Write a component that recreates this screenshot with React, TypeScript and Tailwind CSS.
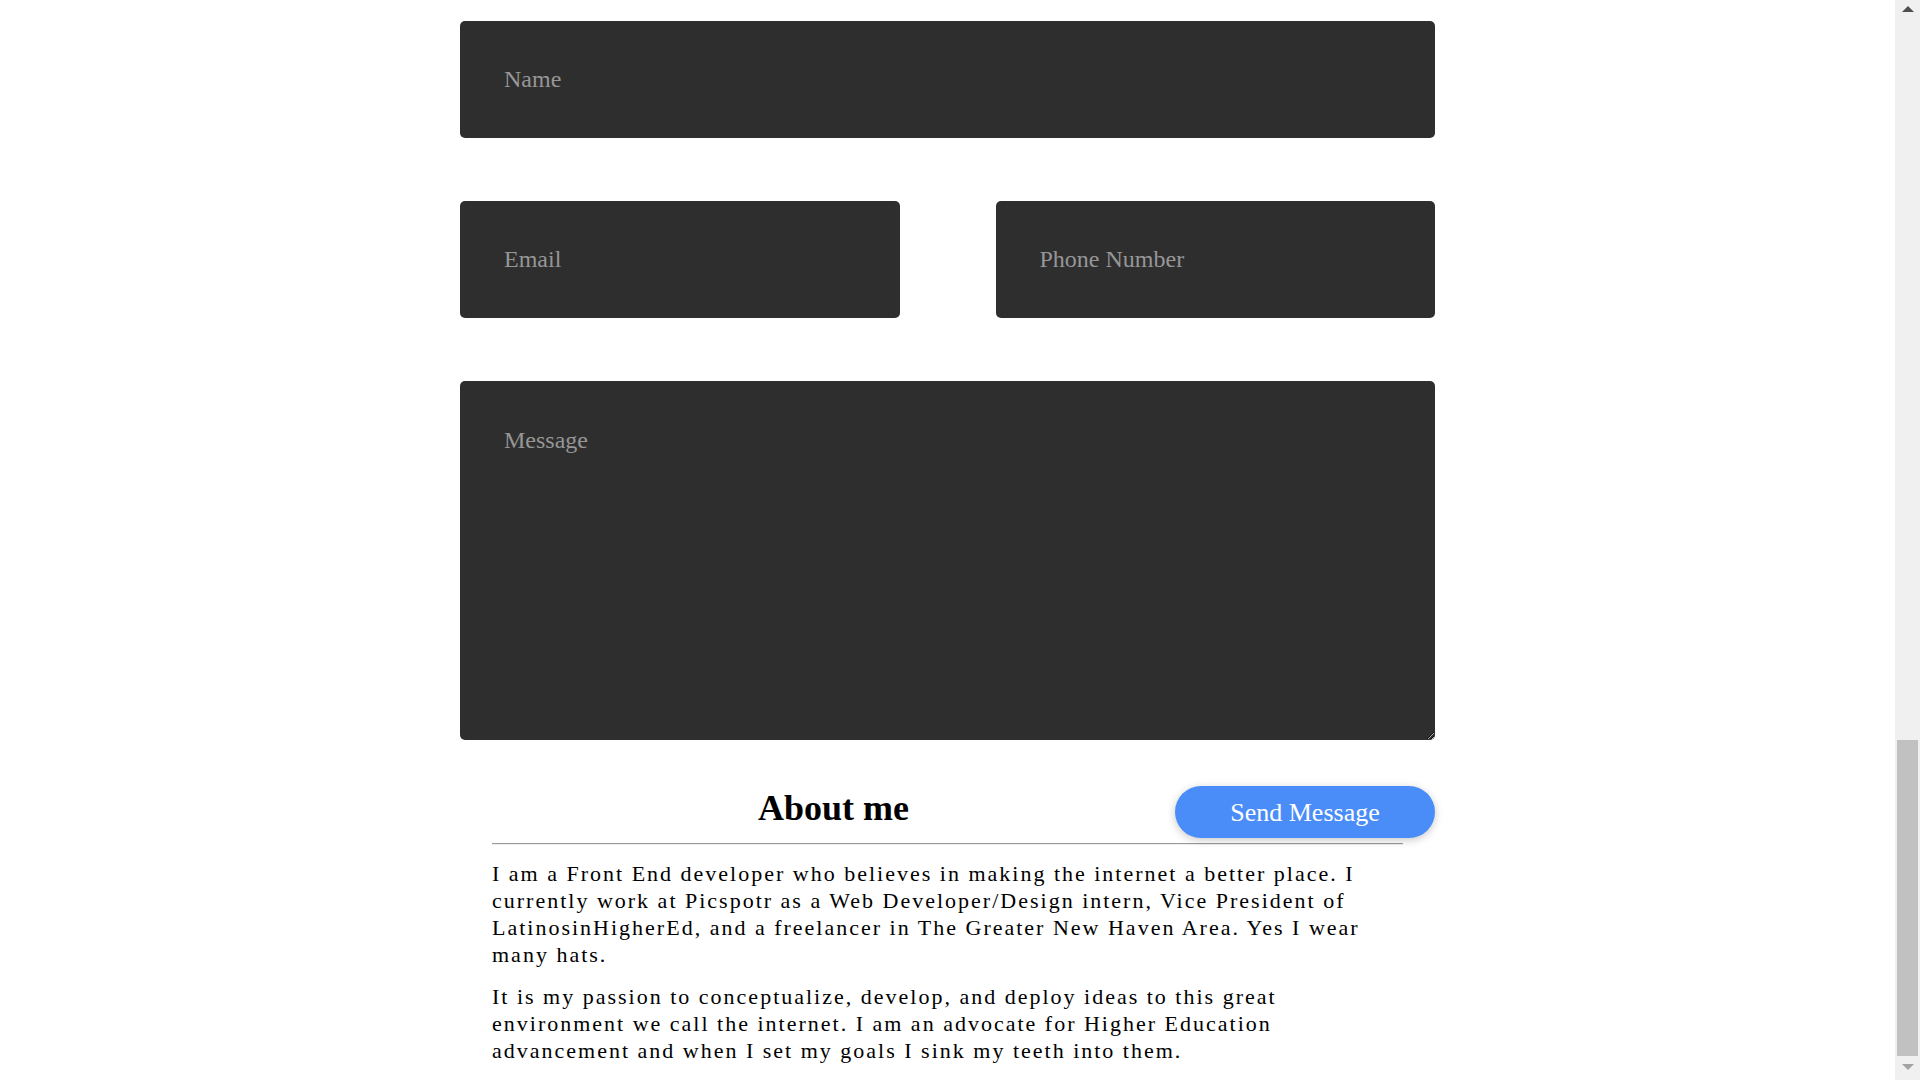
import React from "react";

const serif = "font-['Liberation_Serif','Times_New_Roman',serif]";

function FakeScrollbar() {
  // page is scrolled to the bottom in the reference
  return (
    <div className="fixed right-0 top-0 flex h-screen w-[25px] flex-col items-center bg-[#f0f0f0]">
      <div className="mt-[6px] h-0 w-0 border-x-[6px] border-b-[6px] border-x-transparent border-b-[#505050]" />
      <div className="mt-[728px] h-[316px] w-[21px] bg-[#c1c1c1]" />
      <div className="mt-[8px] h-0 w-0 border-x-[6px] border-t-[6px] border-x-transparent border-t-[#a3a3a3]" />
    </div>
  );
}

export default function App() {
  const field =
    "h-[117px] w-full rounded-[5px] bg-[#2e2e2e] px-[44px] text-[24px] text-white outline-none placeholder:text-[#969696]";

  return (
    <div className={`relative h-screen overflow-hidden bg-white text-black ${serif}`}>
      <div className="w-[1895px]">
        <form className="mx-auto w-[975px] pt-[21px]" onSubmit={(e) => e.preventDefault()}>
          <input className={field} placeholder="Name" />

          <div className="mt-[63px] grid grid-cols-2 gap-[96px]">
            <input className={field} placeholder="Email" />
            <input className={field} placeholder="Phone Number" />
          </div>

          <textarea
            className="mt-[63px] block h-[359px] w-full rounded-[5px] bg-[#2e2e2e] px-[44px] pt-[41px] pb-[44px] text-[24px] text-white outline-none placeholder:text-[#969696]"
            placeholder="Message"
          />

          <div className="mt-[46px] flex items-start">
            <div className="flex-1 pl-[32px] pt-[2px] text-center">
              <h2 className="text-[36px] font-bold leading-[41px]">About me</h2>
            </div>
            <button
              type="submit"
              className="h-[52px] w-[260px] rounded-full bg-[#4b8df8] text-[26px] text-white shadow-[0_2px_8px_rgba(0,0,0,0.22)]"
            >
              Send Message
            </button>
          </div>

          <section className="mx-[32px] mt-[5px]">
            <hr className="border-t border-b border-t-[#9a9a9a] border-b-[#eeeeee]" />
            <p className="mt-[15px] text-[22px] leading-[27px] tracking-[2px]">
              I am a Front End developer who believes in making the internet a better place. I currently work at
              Picspotr as a Web Developer/Design intern, Vice President of LatinosinHigherEd, and a freelancer in The
              Greater New Haven Area. Yes I wear many hats.
            </p>
            <p className="mt-[15px] text-[22px] leading-[27px] tracking-[2px]">
              It is my passion to conceptualize, develop, and deploy ideas to this great environment we call the
              internet. I am an advocate for Higher Education advancement and when I set my goals I sink my teeth into
              them.
            </p>
          </section>
        </form>
      </div>
      <FakeScrollbar />
    </div>
  );
}
